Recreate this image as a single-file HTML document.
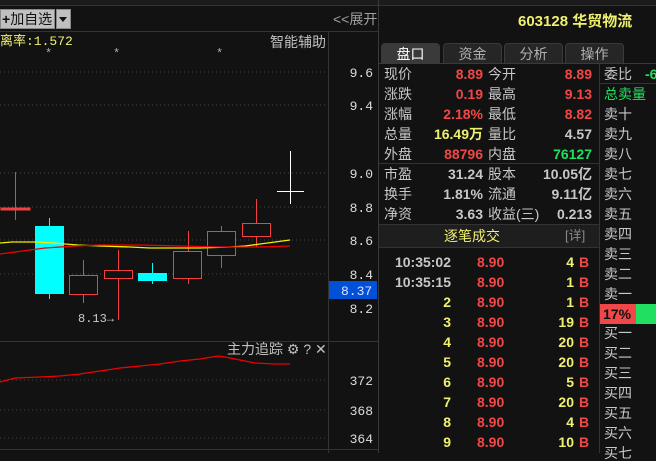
<!DOCTYPE html>
<html><head><meta charset="utf-8"><style>
*{margin:0;padding:0;box-sizing:border-box}
body{width:656px;height:453px;background:#121212;overflow:hidden;position:relative;font-family:"Liberation Sans","Noto Sans CJK SC",sans-serif;font-size:14px;color:#c8c8c8}
.a{position:absolute;white-space:nowrap;line-height:16px}
.m{font-family:"Liberation Mono","Noto Sans CJK SC",monospace}
.r{color:#f04848}.y{color:#f0f070}.g{color:#20e060}.w{color:#c8c8c8}
.b{font-weight:bold}
.tab{position:absolute;top:43px;height:21px;width:59px;background:#262626;border:1px solid #3a3a3a;border-bottom:none;border-radius:4px 4px 0 0;text-align:center;line-height:20px;color:#b0b0b0}
</style></head><body>
<div class="a" style="left:0;top:0;width:656px;height:6px;background:#1c1c1c;border-bottom:1px solid #333"></div>
<!-- toolbar -->
<div class="a" style="left:0;top:9px;width:55px;height:20px;background:#c0c0c0;border:1px solid #888;color:#111;line-height:18px;padding-left:1px"><b>+</b>加自选</div>
<div class="a" style="left:56px;top:9px;width:15px;height:20px;background:#c0c0c0;border:1px solid #888"></div>
<div class="a" style="left:59px;top:17px;width:0;height:0;border-left:4px solid transparent;border-right:4px solid transparent;border-top:5px solid #111"></div>
<div class="a" style="left:333px;top:11px;color:#a0a0a0">&lt;&lt;展开</div>
<div class="a" style="left:0;top:31px;width:378px;height:1px;background:#333"></div>
<div class="a" style="left:328px;top:32px;width:1px;height:421px;background:#333"></div>
<div class="a" style="left:378px;top:0;width:1px;height:453px;background:#3a3a3a"></div>
<div class="a y m" style="left:0;top:34px;font-size:13px">离率:1.572</div>
<div class="a" style="left:270px;top:34px;color:#c0c0c0">智能辅助</div>
<svg class="a" style="left:0;top:0" width="378" height="453">
<g fill="#aab" font-size="12" font-family="Liberation Mono">
<text x="45" y="57">*</text><text x="113" y="57">*</text><text x="216" y="57">*</text></g>
<g stroke="#444" stroke-dasharray="1,3">
<line x1="0" y1="72" x2="328" y2="72"/><line x1="0" y1="105" x2="328" y2="105"/><line x1="0" y1="173" x2="328" y2="173"/><line x1="0" y1="207" x2="328" y2="207"/><line x1="0" y1="240" x2="328" y2="240"/><line x1="0" y1="274" x2="328" y2="274"/>
<line x1="0" y1="380" x2="328" y2="380"/><line x1="0" y1="410" x2="328" y2="410"/><line x1="0" y1="438" x2="328" y2="438"/></g>
<g fill="#ddd" font-size="13" font-family="Liberation Mono" text-anchor="end">
<text x="373" y="77">9.6</text><text x="373" y="110">9.4</text><text x="373" y="178">9.0</text><text x="373" y="212">8.8</text><text x="373" y="245">8.6</text><text x="373" y="279">8.4</text><text x="373" y="313">8.2</text>
<text x="373" y="385">372</text><text x="373" y="415">368</text><text x="373" y="443">364</text></g>
<rect x="329" y="281" width="48" height="18" fill="#0050d8"/>
<text x="341" y="295" fill="#e0e0ff" font-size="13" font-family="Liberation Mono">8.37</text>
<g stroke="#f04040" stroke-width="1" fill="none">
<line x1="15.5" y1="172" x2="15.5" y2="220"/><rect x="1" y="208" width="29" height="2" fill="#f04040"/>
<line x1="83.5" y1="260" x2="83.5" y2="303"/><rect x="69.5" y="275.5" width="28" height="19" fill="#121212"/>
<line x1="118.5" y1="250" x2="118.5" y2="320"/><rect x="104.5" y="270.5" width="28" height="8" fill="#121212"/>
<line x1="188.5" y1="231" x2="188.5" y2="284"/><rect x="173.5" y="251.5" width="28" height="27" fill="#121212"/>
<line x1="221.5" y1="226" x2="221.5" y2="268"/><rect x="207.5" y="231.5" width="28" height="24" fill="#121212"/>
<line x1="256.5" y1="199" x2="256.5" y2="247"/><rect x="242.5" y="223.5" width="28" height="13" fill="#121212"/>
</g>
<g stroke="#00ffff"><line x1="49.5" y1="218" x2="49.5" y2="299"/><line x1="152.5" y1="263" x2="152.5" y2="284"/></g>
<rect x="35" y="226" width="29" height="68" fill="#00ffff"/>
<rect x="138" y="273" width="29" height="8" fill="#00ffff"/>
<g stroke="#fff"><line x1="290.5" y1="151" x2="290.5" y2="204"/><line x1="277" y1="191.5" x2="304" y2="191.5"/></g>
<polyline fill="none" stroke="#f0f000" stroke-width="1.3" points="0,243 12,242 35,242 55,243 65,244 78,245 100,246 130,247 150,248 200,248 230,247 245,246 260,244 275,242 290,240"/>
<polyline fill="none" stroke="#f00000" stroke-width="1.3" points="0,254 15,252 30,250 45,248 60,247 75,246 100,245 140,245 180,246 220,247 260,247 290,246"/>
<text x="78" y="322" fill="#ccc" font-size="12" font-family="Liberation Mono">8.13→</text>
<line x1="0" y1="341.5" x2="378" y2="341.5" stroke="#333"/>
<polyline fill="none" stroke="#f00000" stroke-width="1.3" points="0,382 15,378 40,377 60,376 80,374 100,371 120,368 140,366 160,364 180,361 200,359 218,356 225,357 240,360 255,363 275,364 290,364"/>
<line x1="0" y1="449.5" x2="378" y2="449.5" stroke="#333"/>
</svg>
<div class="a" style="left:227px;top:341px;color:#c0c0c0">主力追踪 ⚙ ? ✕</div>
<!-- right panel -->
<div class="a y b" style="left:518px;top:14px;font-size:15px">603128 华贸物流</div>
<div class="tab" style="left:381px;background:#3a3a3a;color:#fff">盘口</div>
<div class="tab" style="left:443px">资金</div>
<div class="tab" style="left:504px">分析</div>
<div class="tab" style="left:565px">操作</div>
<div class="a" style="left:379px;top:63px;width:277px;height:1px;background:#3a3a3a"></div>
<div class="a" style="left:599px;top:64px;width:1px;height:389px;background:#333"></div>
<div class="a" style="left:379px;top:163px;width:220px;height:1px;background:#333"></div>
<div class="a" style="left:379px;top:224px;width:220px;height:24px;background:#1e1e1e;border-top:1px solid #333;border-bottom:1px solid #333"></div>
<div class="a y" style="left:444px;top:228px">逐笔成交</div>
<div class="a" style="left:565px;top:228px;color:#888;font-size:13px">[详]</div>
<div class="a" style="left:600px;top:83px;width:56px;height:1px;background:#333"></div>
<div id="L"></div>
<script>
var L=[["现价","8.89","r","今开","8.89","r"],["涨跌","0.19","r","最高","9.13","r"],["涨幅","2.18%","r","最低","8.82","r"],["总量","16.49万","y","量比","4.57","w"],["外盘","88796","r","内盘","76127","g"],["市盈","31.24","w","股本","10.05亿","w"],["换手","1.81%","w","流通","9.11亿","w"],["净资","3.63","w","收益(三)","0.213","w"]];
var h="";
L.forEach(function(r,i){var t=66+i*20;
h+='<div class="a" style="left:384px;top:'+t+'px">'+r[0]+'</div>';
h+='<div class="a b '+r[2]+'" style="right:173px;top:'+t+'px">'+r[1]+'</div>';
h+='<div class="a" style="left:488px;top:'+t+'px">'+r[3]+'</div>';
h+='<div class="a b '+r[5]+'" style="right:64px;top:'+t+'px">'+r[4]+'</div>';});
var S=["委比","总卖量","卖十","卖九","卖八","卖七","卖六","卖五","卖四","卖三","卖二","卖一"];
S.forEach(function(s,i){h+='<div class="a '+(i==1?'g':'')+'" style="left:604px;top:'+(66+i*20)+'px">'+s+'</div>';});
h+='<div class="a g b" style="left:645px;top:66px">-6</div>';
h+='<div class="a" style="left:600px;top:304px;width:36px;height:20px;background:#f04848"></div><div class="a" style="left:636px;top:304px;width:20px;height:20px;background:#20e060"></div><div class="a b" style="left:603px;top:306px;color:#111">17%</div>';
["买一","买二","买三","买四","买五","买六","买七"].forEach(function(s,i){h+='<div class="a" style="left:604px;top:'+(325+i*20)+'px">'+s+'</div>';});
var T=[["10:35:02","4"],["10:35:15","1"],["2","1"],["3","19"],["4","20"],["5","20"],["6","5"],["7","20"],["8","4"],["9","10"]];
T.forEach(function(r,i){var t=254+i*20;
h+='<div class="a b '+(i<2?'w':'y')+'" style="right:205px;top:'+t+'px">'+r[0]+'</div>';
h+='<div class="a b r" style="left:477px;top:'+t+'px">8.90</div>';
h+='<div class="a b y" style="right:82px;top:'+t+'px">'+r[1]+'</div>';
h+='<div class="a b r" style="left:579px;top:'+t+'px">B</div>';});
document.getElementById("L").innerHTML=h;
</script>
</body></html>
